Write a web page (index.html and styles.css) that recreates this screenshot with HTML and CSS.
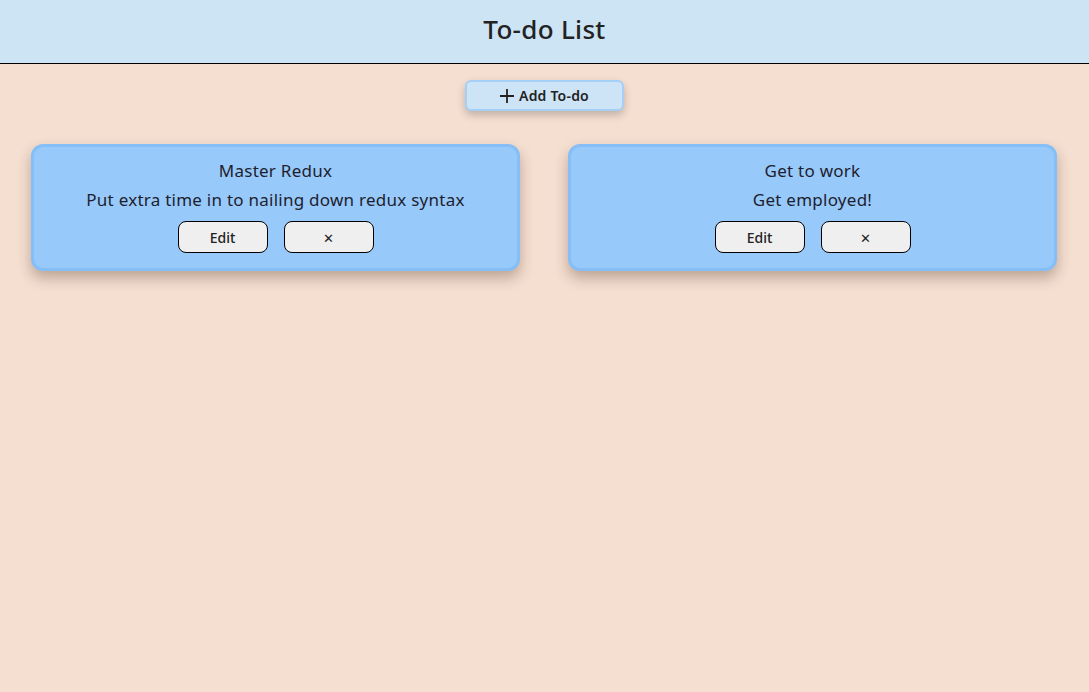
FILE: index.html
```html
<!DOCTYPE html>
<html>
<head>
<meta charset="utf-8">
<title>To-do List</title>
<link rel="stylesheet" href="styles.css">
</head>
<body>
<header class="topbar">
  <h1 class="title">To-do List</h1>
</header>
<main class="content">
  <div class="add-row">
    <button class="add-btn">
      <svg class="plus" width="16" height="16" viewBox="0 0 16 16"><path d="M8 1v14M1 8h14" stroke="#222" stroke-width="1.8" fill="none"/></svg>
      <span>Add To-do</span>
    </button>
  </div>
  <section class="cards">
    <article class="card">
      <div class="card-title">Master Redux</div>
      <div class="card-desc">Put extra time in to nailing down redux syntax</div>
      <div class="card-actions">
        <button class="btn">Edit</button>
        <button class="btn btn-x">&#x2715;</button>
      </div>
    </article>
    <article class="card">
      <div class="card-title">Get to work</div>
      <div class="card-desc">Get employed!</div>
      <div class="card-actions">
        <button class="btn">Edit</button>
        <button class="btn btn-x">&#x2715;</button>
      </div>
    </article>
  </section>
</main>
</body>
</html>
```

FILE: styles.css
```css
* { box-sizing: border-box; }
html, body {
  margin: 0;
  padding: 0;
  height: 100%;
}
body {
  background: #f5dfd1;
  font-family: "Noto Sans", "DejaVu Sans", sans-serif;
  color: #1f1f2a;
}
.topbar {
  height: 64px;
  background: #cde4f5;
  border-bottom: 1px solid #000;
  display: flex;
  align-items: center;
  justify-content: center;
  padding-bottom: 5px;
}
.title {
  margin: 0;
  font-size: 26px;
  font-weight: 500;
  letter-spacing: 0.3px;
  color: #222;
}
.content {
  padding: 16px 32px 0 31px;
}
.add-row {
  display: flex;
  justify-content: center;
}
.add-btn {
  width: 159px;
  height: 31px;
  background: #cde4f6;
  border: 2px solid #a6cff5;
  border-radius: 6px;
  box-shadow: 0 4px 8px rgba(0,0,0,0.22);
  display: flex;
  align-items: center;
  justify-content: center;
  gap: 4px;
  font-family: inherit;
  font-size: 14px;
  font-weight: 600;
  letter-spacing: 0.2px;
  color: #222;
  padding: 0;
}
.plus { display: block; }
.cards {
  margin-top: 33px;
  display: grid;
  grid-template-columns: 1fr 1fr;
  column-gap: 48px;
}
.card {
  background: #97c9fa;
  border: 3px solid #86bef8;
  border-radius: 12px;
  box-shadow: 0 7px 14px rgba(60,30,10,0.3);
  display: flex;
  flex-direction: column;
  align-items: center;
  padding: 12px 10px 15px;
  height: 127px;
}
.card-title, .card-desc {
  font-size: 17px;
  line-height: 24px;
  letter-spacing: 0.25px;
  color: #1e1e2e;
  white-space: nowrap;
}
.card-desc { margin-top: 5px; }
.card-actions {
  margin-top: 9px;
  display: flex;
  gap: 16px;
}
.btn {
  width: 90px;
  height: 32px;
  background: #efefef;
  border: 1px solid #000;
  border-radius: 8px;
  font-family: inherit;
  font-size: 14px;
  font-weight: 500;
  color: #222;
  padding: 0;
}
.btn-x {
  font-size: 13px;
  font-weight: 700;
  padding-top: 2px;
}
```
